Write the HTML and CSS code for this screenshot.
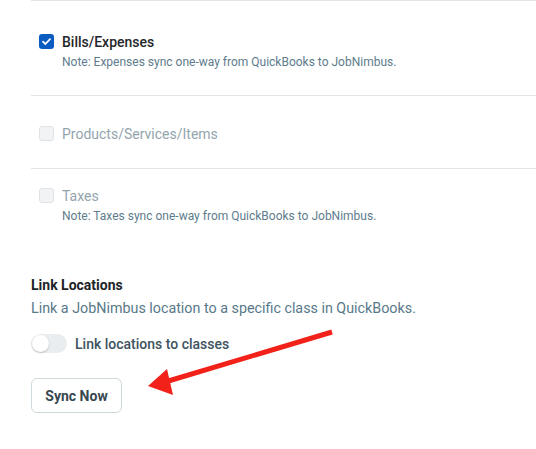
FILE: index.html
```html
<!DOCTYPE html>
<html>
<head>
<meta charset="utf-8">
<link rel="stylesheet" href="styles.css">
</head>
<body>
<div class="page">
  <div class="items">
    <div class="item item-first">
      <div class="row">
        <span class="cb cb-on"><svg width="15" height="15" viewBox="0 0 15 15"><path d="M4 7.6 L6.4 10 L11 5.2" fill="none" stroke="#fff" stroke-width="1.8" stroke-linecap="round" stroke-linejoin="round"/></svg></span>
        <span class="label">Bills/Expenses</span>
      </div>
      <div class="note">Note: Expenses sync one-way from QuickBooks to JobNimbus.</div>
    </div>
    <div class="item item-mid">
      <div class="row">
        <span class="cb cb-off"></span>
        <span class="label label-dis">Products/Services/Items</span>
      </div>
    </div>
    <div class="item item-last">
      <div class="row">
        <span class="cb cb-off"></span>
        <span class="label label-dis">Taxes</span>
      </div>
      <div class="note">Note: Taxes sync one-way from QuickBooks to JobNimbus.</div>
    </div>
  </div>

  <div class="locations">
    <div class="loc-title">Link Locations</div>
    <div class="loc-desc">Link a JobNimbus location to a specific class in QuickBooks.</div>
    <div class="toggle-row">
      <span class="toggle"><span class="knob"></span></span>
      <span class="toggle-label">Link locations to classes</span>
    </div>
    <button class="btn">Sync Now</button>
  </div>

  <svg class="arrow" width="536" height="449" viewBox="0 0 536 449">
    <line x1="332" y1="332" x2="165" y2="382" stroke="#f2221b" stroke-width="5"/>
    <polygon points="148,386 167,369 173,395" fill="#f2221b"/>
  </svg>
</div>
</body>
</html>
```
FILE: styles.css
```css
* { box-sizing: border-box; }
html, body { margin: 0; padding: 0; background: #fff; }
body { font-family: Roboto, "Noto Sans", Arial, sans-serif; width: 536px; height: 449px; overflow: hidden; }
.page { position: relative; padding-left: 31px; height: 449px; }
.items { border-top: 1px solid #e3e6e8; }
.item { border-bottom: 1px solid #e3e6e8; padding-left: 8px; }
.item-first { padding-top: 32px; padding-bottom: 24px; }
.item-mid { padding-top: 29px; padding-bottom: 26px; }
.item-last { border-bottom: none; padding-top: 18px; }
.row { display: flex; align-items: center; height: 17px; gap: 8px; }
.cb { width: 15px; height: 15px; border-radius: 3px; flex: none; display: block; }
.cb svg { display: block; }
.cb-on { background: #0b5cc0; }
.cb-off { background: #f1f3f5; border: 1px solid #dfe3e7; }
.label { font-size: 14px; font-weight: 500; color: #1f272b; }
.label-dis { color: #93a4ad; font-weight: 400; }
.note { font-size: 12px; line-height: 17px; color: #5e7c8c; padding-left: 23px; margin-top: 4px; }
.locations { padding-top: 51px; }
.loc-title { font-size: 14px; font-weight: 700; color: #1d2428; line-height: 18px; }
.loc-desc { font-size: 14.3px; color: #58798a; line-height: 18px; margin-top: 5px; }
.toggle-row { display: flex; align-items: center; gap: 8px; margin-top: 17px; }
.toggle { width: 36px; height: 19px; border-radius: 10px; background: #e9edef; position: relative; display: block; flex: none; }
.knob { position: absolute; left: 1px; top: 1px; width: 17px; height: 17px; border-radius: 50%; background: #fff; box-shadow: 0 1px 2px rgba(0,0,0,0.2); }
.toggle-label { font-size: 14px; font-weight: 500; color: #3e5360; }
.btn { margin-top: 25px; width: 91px; height: 35px; border: 1px solid #cfd8dc; border-radius: 6px; background: #fff; font-family: Roboto, Arial, sans-serif; font-size: 14px; font-weight: 700; color: #37474f; padding: 0; display: block; }
.arrow { position: absolute; left: 0; top: 0; pointer-events: none; }
```
